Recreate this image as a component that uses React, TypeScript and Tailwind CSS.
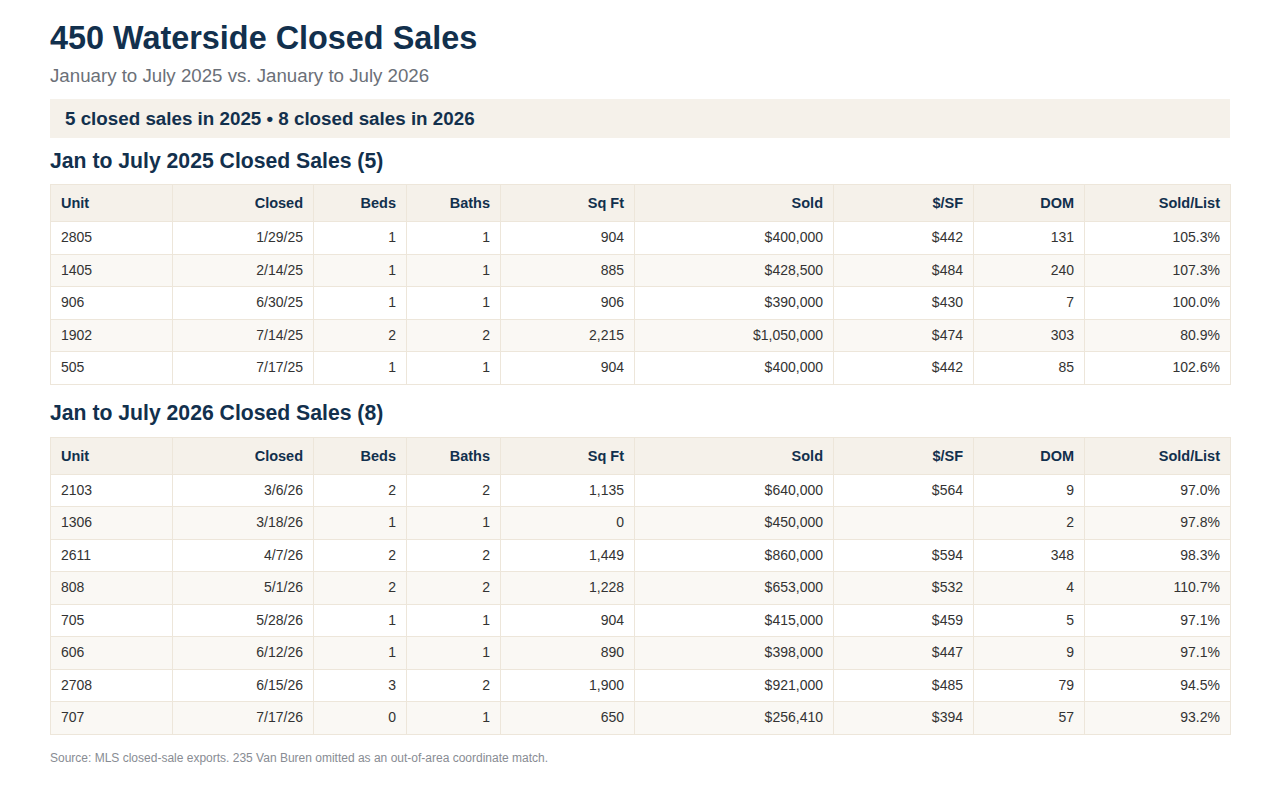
import React from "react";

type Row = string[];

const cols = [
  { h: "Unit", w: "w-[122px]", left: true },
  { h: "Closed", w: "w-[141px]" },
  { h: "Beds", w: "w-[93px]" },
  { h: "Baths", w: "w-[94px]" },
  { h: "Sq Ft", w: "w-[134px]" },
  { h: "Sold", w: "w-[199px]" },
  { h: "$/SF", w: "w-[140px]" },
  { h: "DOM", w: "w-[111px]" },
  { h: "Sold/List", w: "w-[146px]" },
];

const t2025: Row[] = [
  ["2805", "1/29/25", "1", "1", "904", "$400,000", "$442", "131", "105.3%"],
  ["1405", "2/14/25", "1", "1", "885", "$428,500", "$484", "240", "107.3%"],
  ["906", "6/30/25", "1", "1", "906", "$390,000", "$430", "7", "100.0%"],
  ["1902", "7/14/25", "2", "2", "2,215", "$1,050,000", "$474", "303", "80.9%"],
  ["505", "7/17/25", "1", "1", "904", "$400,000", "$442", "85", "102.6%"],
];

const t2026: Row[] = [
  ["2103", "3/6/26", "2", "2", "1,135", "$640,000", "$564", "9", "97.0%"],
  ["1306", "3/18/26", "1", "1", "0", "$450,000", "", "2", "97.8%"],
  ["2611", "4/7/26", "2", "2", "1,449", "$860,000", "$594", "348", "98.3%"],
  ["808", "5/1/26", "2", "2", "1,228", "$653,000", "$532", "4", "110.7%"],
  ["705", "5/28/26", "1", "1", "904", "$415,000", "$459", "5", "97.1%"],
  ["606", "6/12/26", "1", "1", "890", "$398,000", "$447", "9", "97.1%"],
  ["2708", "6/15/26", "3", "2", "1,900", "$921,000", "$485", "79", "94.5%"],
  ["707", "7/17/26", "0", "1", "650", "$256,410", "$394", "57", "93.2%"],
];

function SalesTable({ rows }: { rows: Row[] }) {
  return (
    <table className="w-[1180px] border-collapse table-fixed text-[14px]">
      <thead>
        <tr className="bg-[#f5f1ea]">
          {cols.map((c) => (
            <th
              key={c.h}
              className={`${c.w} border border-[#ede6da] px-[10px] py-[8px] leading-[20px] text-[14.5px] font-bold text-[#12304d] ${
                c.left ? "text-left" : "text-right"
              }`}
            >
              {c.h}
            </th>
          ))}
        </tr>
      </thead>
      <tbody>
        {rows.map((r, i) => (
          <tr key={i} className={i % 2 === 1 ? "bg-[#faf8f4]" : "bg-white"}>
            {r.map((v, j) => (
              <td
                key={j}
                className={`border border-[#ede6da] px-[10px] py-[6px] leading-[19.5px] text-[#333333] ${
                  j === 0 ? "text-left" : "text-right"
                }`}
              >
                {v}
              </td>
            ))}
          </tr>
        ))}
      </tbody>
    </table>
  );
}

export default function App() {
  return (
    <div
      className="min-h-[786px] bg-white px-[50px] pt-[19px]"
      style={{ fontFamily: '"Liberation Sans", Arial, Helvetica, sans-serif' }}
    >
      <h1 className="text-[32.4px] leading-[38px] font-bold text-[#12304d]">
        450 Waterside Closed Sales
      </h1>
      <p className="mt-[8px] text-[18.7px] leading-[22px] text-[#6b7078]">
        January to July 2025 vs. January to July 2026
      </p>
      <div className="mt-[12px] w-[1180px] bg-[#f5f1ea] pl-[15px] py-[8px] text-[18.8px] leading-[23px] font-bold text-[#12304d]">
        5 closed sales in 2025 • 8 closed sales in 2026
      </div>
      <h2 className="mt-[11px] mb-[11px] text-[21.2px] leading-[24px] font-bold text-[#12304d]">
        Jan to July 2025 Closed Sales (5)
      </h2>
      <SalesTable rows={t2025} />
      <h2 className="mt-[16px] mb-[12px] text-[21.2px] leading-[24px] font-bold text-[#12304d]">
        Jan to July 2026 Closed Sales (8)
      </h2>
      <SalesTable rows={t2026} />
      <p className="mt-[15px] text-[12px] leading-[16px] text-[#888c93]">
        Source: MLS closed-sale exports. 235 Van Buren omitted as an out-of-area coordinate match.
      </p>
    </div>
  );
}
